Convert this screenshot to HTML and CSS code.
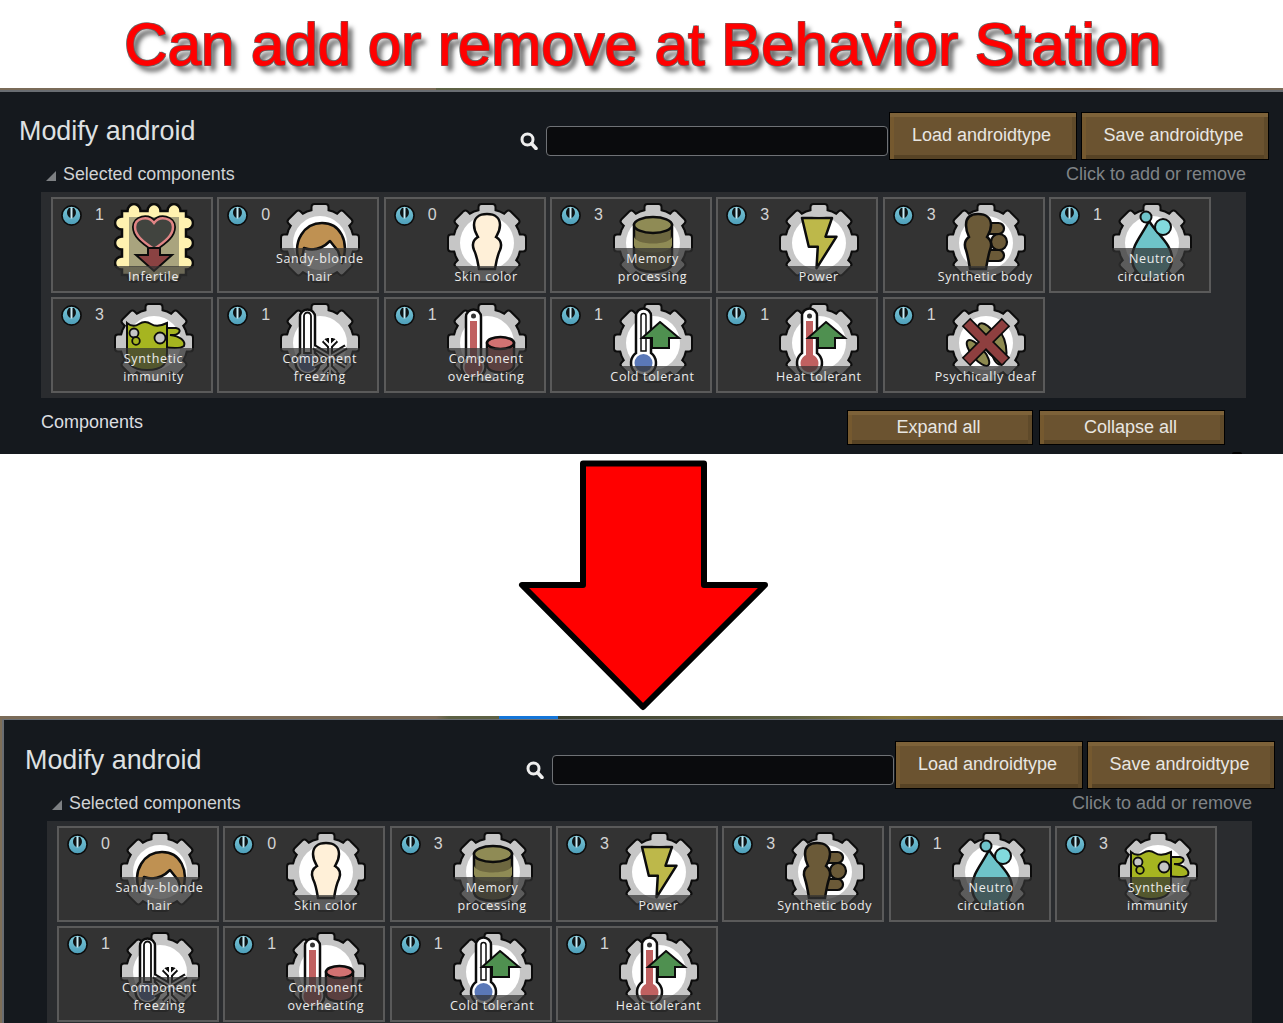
FILE: index.html
```html
<!DOCTYPE html>
<html lang="en">
<head>
<meta charset="utf-8">
<title>Can add or remove at Behavior Station</title>
<link rel="stylesheet" href="styles.css">
</head>
<body>
<svg class="defs" aria-hidden="true">
  <defs>
    <linearGradient id="teal" x1="0" y1="0" x2="0" y2="1">
      <stop offset="0" stop-color="#7cc9da"/><stop offset="1" stop-color="#4c9db8"/>
    </linearGradient>
    <symbol id="power" viewBox="0 0 20 20">
      <circle cx="10" cy="10" r="9.100" fill="url(#teal)" stroke="#0c0c0c" stroke-width="1.600"/>
      <path d="M7.600 2.800C4.800 5.400 5 10.600 9.200 12.400V2.800ZM12.400 2.800C15.200 5.400 15 10.600 10.800 12.400V2.800Z" fill="#0e1214"/>
      <rect x="9.200" y="2.400" width="1.600" height="10.400" fill="#cfeaf1"/>
    </symbol>
    <g id="gearshape">
      <circle cx="40" cy="40" r="33"/>
      <rect x="32.500" y="2" width="15" height="13" rx="2"/>
      <rect x="32.500" y="2" width="15" height="13" rx="2" transform="rotate(45 40 40)"/>
      <rect x="32.500" y="2" width="15" height="13" rx="2" transform="rotate(90 40 40)"/>
      <rect x="32.500" y="2" width="15" height="13" rx="2" transform="rotate(135 40 40)"/>
      <rect x="32.500" y="2" width="15" height="13" rx="2" transform="rotate(180 40 40)"/>
      <rect x="32.500" y="2" width="15" height="13" rx="2" transform="rotate(225 40 40)"/>
      <rect x="32.500" y="2" width="15" height="13" rx="2" transform="rotate(270 40 40)"/>
      <rect x="32.500" y="2" width="15" height="13" rx="2" transform="rotate(315 40 40)"/>
    </g>
    <g id="gear">
      <use href="#gearshape" fill="#0c0c0c" stroke="#0c0c0c" stroke-width="4"/>
      <use href="#gearshape" fill="#c6c6c6"/>
      <circle cx="40" cy="40" r="27" fill="#fff"/>
    </g>
    <symbol id="thermotube" viewBox="0 0 80 80">
      <path d="M23 13a7.500 7.500 0 0 1 15 0V50a12.500 12.500 0 1 1-15 0Z" fill="#fff" stroke="#0c0c0c" stroke-width="2.500"/>
    </symbol>
    <symbol id="uparrow" viewBox="0 0 80 80">
      <path d="M47 19L66 35H56V45H39V35H29Z" fill="#4f9050" stroke="#0c0c0c" stroke-width="2"/>
    </symbol>
    <symbol id="i-infertile" viewBox="0 0 80 80">
      <path d="M8 8H13.500A6.500 7 0 0 1 26.500 8H33.500A6.500 7 0 0 1 46.500 8H53.500A6.500 7 0 0 1 66.500 8H72V13.500A7 6.500 0 0 1 72 26.500V33.500A7 6.500 0 0 1 72 46.500V53.500A7 6.500 0 0 1 72 66.500V72H66.500A6.500 7 0 0 1 53.500 72H46.500A6.500 7 0 0 1 33.500 72H26.500A6.500 7 0 0 1 13.500 72H8V66.500A7 6.500 0 0 1 8 53.500V46.500A7 6.500 0 0 1 8 33.500V26.500A7 6.500 0 0 1 8 13.500Z" fill="#fff2b0" stroke="#0c0c0c" stroke-width="2.500"/>
      <rect x="15" y="14" width="50" height="50" fill="#a9a47e"/>
      <path d="M40 46C28 38 21 32 21 24C21 15 34 12 40 20C46 12 59 15 59 24C59 32 52 38 40 46Z" fill="#41443f" stroke="#0c0c0c" stroke-width="6"/>
      <path d="M40 46C28 38 21 32 21 24C21 15 34 12 40 20C46 12 59 15 59 24C59 32 52 38 40 46Z" fill="#41443f" stroke="#e08585" stroke-width="2.500"/>
      <path d="M34 45H46V52H58L40 68L22 52H34Z" fill="#8a4242" stroke="#0c0c0c" stroke-width="2"/>
    </symbol>
    <symbol id="i-hair" viewBox="0 0 80 80">
      <use href="#gear"/>
      <path d="M20 60C11 38 25 20 42 20C60 20 70 38 62 60L58 48L50 38Q38 50 24 45L23 50Z" fill="#bf9152" stroke="#0c0c0c" stroke-width="2.500" stroke-linejoin="round"/>
    </symbol>
    <symbol id="i-skin" viewBox="0 0 80 80">
      <use href="#gear"/>
      <path d="M40 11C32 11 27 15 27 22C27 28 30 32 31 34C26 37 25 42 27 47C30 53 31 60 32 66H48C49 60 50 53 53 47C55 42 54 37 49 34C50 32 53 28 53 22C53 15 48 11 40 11Z" fill="#fff0d8" stroke="#0c0c0c" stroke-width="2.500"/>
    </symbol>
    <symbol id="i-memory" viewBox="0 0 80 80">
      <use href="#gear"/>
      <path d="M21 22V60C21 72 59 72 59 60V22Z" fill="#6e6840" stroke="#0c0c0c" stroke-width="2.500"/>
      <path d="M21 33C21 43 59 43 59 33V42C59 52 21 52 21 42Z" fill="#8f8b55"/>
      <ellipse cx="40" cy="22" rx="19" ry="8" fill="#8f8b55" stroke="#0c0c0c" stroke-width="2.500"/>
    </symbol>
    <symbol id="i-power" viewBox="0 0 80 80">
      <use href="#gear"/>
      <path d="M23 15H53L46.500 33.700H57.500L37.500 65.300L38.800 43.700H29.800Z" fill="#bdb84a" stroke="#0c0c0c" stroke-width="2.500" stroke-linejoin="round"/>
    </symbol>
    <symbol id="i-body" viewBox="0 0 80 80">
      <use href="#gear"/>
      <rect x="38" y="20" width="20" height="11" rx="5.500" fill="#6b5a38" stroke="#0c0c0c" stroke-width="2.200"/>
      <rect x="38" y="47" width="20" height="11" rx="5.500" fill="#6b5a38" stroke="#0c0c0c" stroke-width="2.200"/>
      <circle cx="53" cy="39" r="8" fill="#6b5a38" stroke="#0c0c0c" stroke-width="2.200"/>
      <path d="M32 11C24 11 20 15 20 22C20 28 22 32 23 34C19 37 18 42 20 47C22 53 23 60 24 66H40C41 60 42 53 44 47C46 42 45 37 41 34C42 32 45 28 45 22C45 15 40 11 32 11Z" fill="#6b5a38" stroke="#0c0c0c" stroke-width="2.500"/>
    </symbol>
    <symbol id="i-neutro" viewBox="0 0 80 80">
      <use href="#gear"/>
      <path d="M37 18C30 32 20 42 20 55C20 68 30 76 40 76C50 76 60 68 60 55C60 42 46 32 37 18Z" fill="#6ec3c9" stroke="#0c0c0c" stroke-width="2.500"/>
      <circle cx="34" cy="14" r="5.500" fill="#6ec3c9" stroke="#0c0c0c" stroke-width="2"/>
      <circle cx="51" cy="24" r="8" fill="#82dadd" stroke="#0c0c0c" stroke-width="2"/>
    </symbol>
    <symbol id="i-immunity" viewBox="0 0 80 80">
      <use href="#gear"/>
      <path d="M50 25H62C68 26 66 31 60 32H56C66 33 72 38 70 43C66 46 56 45 50 44Z" fill="#a6b520" stroke="#0c0c0c" stroke-width="2"/>
      <path d="M13 20Q19 25 25 21T37 21T53 20V50C53 60 50 67 33 67C17 67 13 60 13 50Z" fill="#a6b520" stroke="#0c0c0c" stroke-width="2"/>
      <circle cx="20" cy="30" r="4.500" fill="#c6c6c6" stroke="#0c0c0c" stroke-width="1.800"/>
      <circle cx="22" cy="38" r="3.800" fill="#a6b520" stroke="#0c0c0c" stroke-width="1.800"/>
      <circle cx="46" cy="35" r="5.500" fill="#c6c6c6" stroke="#0c0c0c" stroke-width="1.800"/>
    </symbol>
    <symbol id="i-freezing" viewBox="0 0 80 80">
      <use href="#gear"/>
      <path d="M20 14a7.500 7.500 0 0 1 15 0V50a12 12 0 1 1-15 0Z" fill="#fff" stroke="#0c0c0c" stroke-width="2.500"/>
      <path d="M24 13a3.500 3.500 0 0 1 7 0V50H24Z" fill="#fff" stroke="#0c0c0c" stroke-width="1.800"/>
      <circle cx="27.500" cy="60" r="9" fill="#5568a0"/>
      <path d="M50 35V72M34 44L66 63M66 44L34 63M44 37L50 43L56 37M44 70L50 64L56 70" fill="none" stroke="#0c0c0c" stroke-width="6"/>
      <path d="M50 35V72M34 44L66 63M66 44L34 63M44 37L50 43L56 37M44 70L50 64L56 70" fill="none" stroke="#fff" stroke-width="2"/>
    </symbol>
    <symbol id="i-overheat" viewBox="0 0 80 80">
      <use href="#gear"/>
      <path d="M19 14a7.500 7.500 0 0 1 15 0V54a12 12 0 1 1-15 0Z" fill="#fff" stroke="#0c0c0c" stroke-width="2.500"/>
      <path d="M23 18H30V56a9 9 0 1 1-7 0Z" fill="#c06060"/>
      <circle cx="26.500" cy="13" r="2.500" fill="#333"/>
      <path d="M40 40V62C40 72 67 72 67 62V40Z" fill="#bf6060" stroke="#0c0c0c" stroke-width="2.500"/>
      <ellipse cx="53.500" cy="40" rx="13.500" ry="6" fill="#d27272" stroke="#0c0c0c" stroke-width="2.500"/>
    </symbol>
    <symbol id="i-cold" viewBox="0 0 80 80">
      <use href="#gear"/>
      <use href="#thermotube"/>
      <path d="M28 13a2.500 2.500 0 0 1 5 0V48H28Z" fill="#fff" stroke="#0c0c0c" stroke-width="1.500"/>
      <circle cx="30.500" cy="60" r="9" fill="#5a78b8"/>
      <use href="#uparrow"/>
    </symbol>
    <symbol id="i-heat" viewBox="0 0 80 80">
      <use href="#gear"/>
      <use href="#thermotube"/>
      <path d="M27 18H34V52a9 9 0 1 1-7 0Z" fill="#c06060"/>
      <circle cx="30.500" cy="13" r="2.500" fill="#333"/>
      <use href="#uparrow"/>
    </symbol>
    <symbol id="i-deaf" viewBox="0 0 80 80">
      <use href="#gear"/>
      <g fill="#8d8a50" stroke="#0c0c0c" stroke-width="2">
        <ellipse cx="44" cy="38" rx="20" ry="8" transform="rotate(60 44 38)"/>
        <ellipse cx="32" cy="50" rx="16" ry="6" transform="rotate(50 32 50)"/>
        <ellipse cx="52" cy="44" rx="18" ry="8" transform="rotate(80 52 44)"/>
      </g>
      <path d="M40 39L20 19M40 39L60 19M40 39L20 59M40 39L60 59" stroke="#0c0c0c" stroke-width="12"/>
      <path d="M40 39L21 20M40 39L59 20M40 39L21 58M40 39L59 58" stroke="#8e3f3f" stroke-width="8.500"/>
    </symbol>
  </defs>
</svg>

<header class="banner"><h1 class="banner-title">Can add or remove at Behavior Station</h1></header>

<div class="strip strip-top"></div>
<section class="panel panel-top">
  <div class="panel-head">
    <h2 class="panel-title">Modify android</h2>
    <div class="search">
      <svg class="search-icon" viewBox="0 0 18 18"><circle cx="7.500" cy="7.500" r="5.500" fill="none" stroke="#eee" stroke-width="3"/><path d="M11.500 11.500L16 16.500" stroke="#eee" stroke-width="3.500" stroke-linecap="round"/></svg>
      <div class="search-box"></div>
    </div>
    <div class="btn btn-big">Load androidtype</div>
    <div class="btn btn-big">Save androidtype</div>
  </div>
  <div class="section-head">
    <span class="tri"></span><span class="section-name">Selected components</span>
    <span class="hint">Click to add or remove</span>
  </div>
  <div class="grid">
    <div class="card"><svg class="pw"><use href="#power"/></svg><span class="count">1</span><svg class="ico"><use href="#i-infertile"/></svg><div class="label">Infertile</div></div>
    <div class="card"><svg class="pw"><use href="#power"/></svg><span class="count">0</span><svg class="ico"><use href="#i-hair"/></svg><div class="label">Sandy-blonde<br>hair</div></div>
    <div class="card"><svg class="pw"><use href="#power"/></svg><span class="count">0</span><svg class="ico"><use href="#i-skin"/></svg><div class="label">Skin color</div></div>
    <div class="card"><svg class="pw"><use href="#power"/></svg><span class="count">3</span><svg class="ico"><use href="#i-memory"/></svg><div class="label">Memory<br>processing</div></div>
    <div class="card"><svg class="pw"><use href="#power"/></svg><span class="count">3</span><svg class="ico"><use href="#i-power"/></svg><div class="label">Power</div></div>
    <div class="card"><svg class="pw"><use href="#power"/></svg><span class="count">3</span><svg class="ico"><use href="#i-body"/></svg><div class="label">Synthetic body</div></div>
    <div class="card"><svg class="pw"><use href="#power"/></svg><span class="count">1</span><svg class="ico"><use href="#i-neutro"/></svg><div class="label">Neutro<br>circulation</div></div>
    <div class="card"><svg class="pw"><use href="#power"/></svg><span class="count">3</span><svg class="ico"><use href="#i-immunity"/></svg><div class="label">Synthetic<br>immunity</div></div>
    <div class="card"><svg class="pw"><use href="#power"/></svg><span class="count">1</span><svg class="ico"><use href="#i-freezing"/></svg><div class="label">Component<br>freezing</div></div>
    <div class="card"><svg class="pw"><use href="#power"/></svg><span class="count">1</span><svg class="ico"><use href="#i-overheat"/></svg><div class="label">Component<br>overheating</div></div>
    <div class="card"><svg class="pw"><use href="#power"/></svg><span class="count">1</span><svg class="ico"><use href="#i-cold"/></svg><div class="label">Cold tolerant</div></div>
    <div class="card"><svg class="pw"><use href="#power"/></svg><span class="count">1</span><svg class="ico"><use href="#i-heat"/></svg><div class="label">Heat tolerant</div></div>
    <div class="card"><svg class="pw"><use href="#power"/></svg><span class="count">1</span><svg class="ico"><use href="#i-deaf"/></svg><div class="label">Psychically deaf</div></div>
  </div>
  <div class="components-row">
    <span class="components-name">Components</span>
    <div class="btn btn-small">Expand all</div>
    <div class="btn btn-small">Collapse all</div>
  </div>
</section>

<svg class="big-arrow" viewBox="0 454 1283 262" aria-hidden="true">
  <path d="M583 463.500H704V585H765L643 707L522 585H583Z" fill="#f00" stroke="#000" stroke-width="6" stroke-linejoin="round"/>
</svg>

<div class="strip strip-bottom"></div>
<div class="lower">
<section class="panel panel-bottom">
  <div class="panel-head">
    <h2 class="panel-title">Modify android</h2>
    <div class="search">
      <svg class="search-icon" viewBox="0 0 18 18"><circle cx="7.500" cy="7.500" r="5.500" fill="none" stroke="#eee" stroke-width="3"/><path d="M11.500 11.500L16 16.500" stroke="#eee" stroke-width="3.500" stroke-linecap="round"/></svg>
      <div class="search-box"></div>
    </div>
    <div class="btn btn-big">Load androidtype</div>
    <div class="btn btn-big">Save androidtype</div>
  </div>
  <div class="section-head">
    <span class="tri"></span><span class="section-name">Selected components</span>
    <span class="hint">Click to add or remove</span>
  </div>
  <div class="grid">
    <div class="card"><svg class="pw"><use href="#power"/></svg><span class="count">0</span><svg class="ico"><use href="#i-hair"/></svg><div class="label">Sandy-blonde<br>hair</div></div>
    <div class="card"><svg class="pw"><use href="#power"/></svg><span class="count">0</span><svg class="ico"><use href="#i-skin"/></svg><div class="label">Skin color</div></div>
    <div class="card"><svg class="pw"><use href="#power"/></svg><span class="count">3</span><svg class="ico"><use href="#i-memory"/></svg><div class="label">Memory<br>processing</div></div>
    <div class="card"><svg class="pw"><use href="#power"/></svg><span class="count">3</span><svg class="ico"><use href="#i-power"/></svg><div class="label">Power</div></div>
    <div class="card"><svg class="pw"><use href="#power"/></svg><span class="count">3</span><svg class="ico"><use href="#i-body"/></svg><div class="label">Synthetic body</div></div>
    <div class="card"><svg class="pw"><use href="#power"/></svg><span class="count">1</span><svg class="ico"><use href="#i-neutro"/></svg><div class="label">Neutro<br>circulation</div></div>
    <div class="card"><svg class="pw"><use href="#power"/></svg><span class="count">3</span><svg class="ico"><use href="#i-immunity"/></svg><div class="label">Synthetic<br>immunity</div></div>
    <div class="card"><svg class="pw"><use href="#power"/></svg><span class="count">1</span><svg class="ico"><use href="#i-freezing"/></svg><div class="label">Component<br>freezing</div></div>
    <div class="card"><svg class="pw"><use href="#power"/></svg><span class="count">1</span><svg class="ico"><use href="#i-overheat"/></svg><div class="label">Component<br>overheating</div></div>
    <div class="card"><svg class="pw"><use href="#power"/></svg><span class="count">1</span><svg class="ico"><use href="#i-cold"/></svg><div class="label">Cold tolerant</div></div>
    <div class="card"><svg class="pw"><use href="#power"/></svg><span class="count">1</span><svg class="ico"><use href="#i-heat"/></svg><div class="label">Heat tolerant</div></div>
  </div>
</section>
</div>
</body>
</html>
```
FILE: styles.css
```css
* { box-sizing: border-box; }
html, body { margin: 0; padding: 0; }
body {
  width: 1283px;
  height: 1023px;
  overflow: hidden;
  background: #fff;
  font-family: "Liberation Sans", Arial, sans-serif;
}
.defs { display: block; width: 0; height: 0; }

.banner { height: 88px; display: flex; align-items: center; justify-content: center; }
.banner-title {
  margin: 0;
  padding: 2px 0 0 3px;
  font-size: 60px;
  font-weight: 400;
  line-height: 88px;
  color: #f00;
  -webkit-text-stroke: .8px #f00;
  text-shadow: -1px -1px 0 #686868, 1px -1px 0 #686868, -1px 1px 0 #686868, 1px 1px 0 #686868, 5px 6px 5px rgba(0,0,0,.65);
  white-space: nowrap;
}

.strip { height: 2px; }
.strip-top {
  background: linear-gradient(90deg, #7a6b58 0, #7a6b58 34%, #5d6144 34%, #6b6a4c 55%, #776a4e 60%, #8a7a3f 70%, #7a5a38 85%, #7a6b58 90%, #7a6b58 100%);
}
.strip-bottom {
  height: 3px;
  background: linear-gradient(90deg, #7a6b58 0, #7a6b58 34%, #5d6144 35%, #5d6144 38.900%, #1475d8 38.900%, #1475d8 43.500%, #3c4030 43.500%, #5d6144 62%, #8a7a3f 70%, #7a5a38 85%, #7a6b58 90%, #7a6b58 100%);
}

.panel {
  position: relative;
  background: #15191e;
  border-top: 2px solid #696d72;
  color: #d6d8da;
}
.panel-top {
  height: 364px;
  padding: 20px 14px 0 19px;
}
.panel-top::after {
  content: "";
  position: absolute;
  right: 41px;
  bottom: 0;
  width: 10px;
  height: 2px;
  background: #000;
  border-radius: 2px 2px 0 0;
}
.lower { height: 304px; padding-left: 2px; background: #7d6e58; overflow: hidden; }
.panel-bottom {
  height: 304px;
  padding: 21px 8px 0 21px;
  border-top-width: 1px;
  border-left: 2px solid #696d72;
  overflow: hidden;
}

.panel-head { display: flex; height: 48px; }
.panel-title {
  margin: 0;
  font-size: 26.900px;
  font-weight: 400;
  line-height: 39px;
  color: #dfe1e2;
}
.search { margin-left: auto; margin-right: 1px; padding-top: 14px; display: flex; align-items: flex-start; }
.search-icon { width: 18px; height: 18px; margin: 6px 8px 0 0; }
.search-box {
  width: 342px;
  height: 30px;
  background: #0a0b0d;
  border: 1px solid #6f7276;
  border-radius: 4px;
}
.btn {
  display: flex;
  align-items: center;
  justify-content: center;
  padding-right: 3px;
  background: #6b5330;
  border: 1px solid #000;
  color: #e8e6e2;
  font-size: 18px;
  box-shadow: inset 0 4px 0 #7d6239, inset 4px 0 0 #75592f, inset -4px 0 0 #5f4a2a, inset 0 -4px 0 #574325;
}
.btn-big { width: 188px; height: 48px; padding-bottom: 1px; }
.btn-big + .btn-big { margin-left: 4px; }
.btn-small { width: 186px; height: 35px; }
.btn-small + .btn-small { margin-left: 6px; }

.section-head {
  display: flex;
  align-items: center;
  height: 32px;
  margin: 0 23px 0 22px;
  padding-bottom: 4px;
  font-size: 18px;
}
.tri {
  width: 0;
  height: 0;
  margin: 3px 7px 0 5px;
  border-style: solid;
  border-width: 0 0 10px 10px;
  border-color: transparent transparent #7d8083 transparent;
}
.section-name { color: #d0d2d4; font-size: 17.850px; }
.hint { margin-left: auto; color: #7f8386; }

.grid {
  display: grid;
  grid-template-columns: repeat(7, 162px);
  grid-auto-rows: 96px;
  column-gap: 4.330px;
  row-gap: 4px;
  margin: 0 23px 0 22px;
  padding: 5px 10px;
  background: #2a2c2f;
}
.card {
  position: relative;
  display: grid;
  grid-template-columns: 21px 1fr 80px;
  align-items: start;
  padding: 4px 17px 0 8px;
  background: #333;
  border: 2px solid #5a5a5a;
}
.pw { width: 21px; height: 21px; margin-top: 2px; }
.count {
  margin-top: 2px;
  padding-left: 13px;
  font-size: 16px;
  line-height: 20px;
  color: #d4d4d4;
}
.ico { width: 80px; height: 80px; }
.label {
  position: absolute;
  left: 50px;
  width: 101px;
  bottom: 3px;
  padding: 2px 0 2px;
  text-align: center;
  white-space: nowrap;
  font-family: "Open Sans", sans-serif;
  font-size: 12.500px;
  line-height: 18px;
  letter-spacing: .65px;
  color: #ececec;
  background: linear-gradient(90deg, rgba(51,51,51,0), rgba(51,51,51,.72) 14%, rgba(51,51,51,.72) 86%, rgba(51,51,51,0));
}

.components-row {
  display: flex;
  align-items: flex-start;
  margin: 12px 23px 0 22px;
  padding-right: 21px;
}
.components-name { margin-right: auto; font-size: 18px; line-height: 25px; color: #dcdee0; }

.big-arrow { display: block; width: 1283px; height: 262px; }
```
